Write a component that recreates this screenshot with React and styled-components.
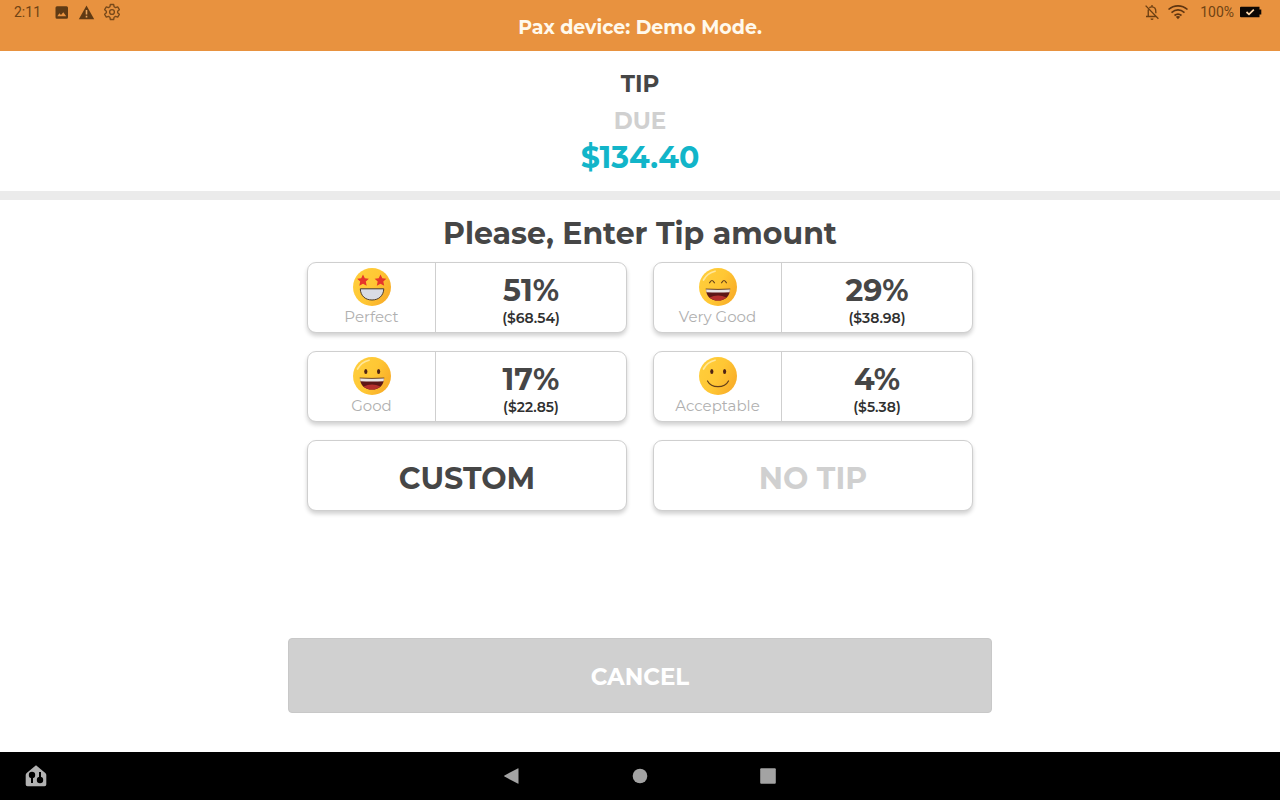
import React from "react";
import styled, { createGlobalStyle } from "styled-components";

const GlobalStyle = createGlobalStyle`
  * { box-sizing: border-box; }
  body {
    margin: 0;
    background: #fff;
    font-family: Montserrat, Inter, "Open Sans", sans-serif;
    color: #464646;
  }
  h1, h2, p { margin: 0; }
  button { font: inherit; color: inherit; cursor: pointer; }
  svg { display: block; flex: none; }
`;

const Page = styled.div`
  min-height: 100vh;
  display: flex;
  flex-direction: column;
`;

const Header = styled.header`
  display: grid;
  grid-template-columns: 1fr auto 1fr;
  height: 51px;
  background: #e8923f;
`;

const StatusGroup = styled.div`
  display: flex;
  align-items: center;
  justify-content: ${(p) => (p.$end ? "flex-end" : "flex-start")};
  gap: ${(p) => (p.$end ? "6px" : "8px")};
  height: 24px;
  padding: 0 18px 0 14px;
  font-family: Roboto, sans-serif;
  font-size: 14px;
  line-height: 24px;
  color: #6f4314;
`;

const Clock = styled.time`
  margin-right: 4px;
`;

const Battery = styled.span`
  margin-left: 5px;
`;

const DeviceNotice = styled.p`
  align-self: center;
  padding-top: 4px;
  font-size: 19px;
  line-height: 24px;
  font-weight: 700;
  color: #fff9ec;
`;

const Summary = styled.section`
  display: flex;
  flex-direction: column;
  align-items: center;
  height: 149px;
  padding-top: 15px;
  border-bottom: 9px solid #ebebeb;
  text-align: center;
`;

const SummaryLine = styled.p`
  font-size: 23px;
  line-height: 37px;
  font-weight: 700;
  color: ${(p) => (p.$muted ? "#d0d0d0" : "#464646")};
`;

const Total = styled.p`
  font-size: 30px;
  line-height: 36px;
  font-weight: 700;
  color: #12b5c9;
`;

const Main = styled.main`
  flex: 1;
  display: flex;
  flex-direction: column;
  align-items: center;
  padding: 14px 24px 39px;
`;

const Prompt = styled.h2`
  font-size: 30px;
  line-height: 40px;
  font-weight: 700;
`;

const Choices = styled.div`
  display: grid;
  grid-template-columns: 1fr 1fr;
  grid-auto-rows: 71px;
  gap: 18px 26px;
  width: 100%;
  max-width: 666px;
  margin-top: 8px;
`;

const Card = styled.button`
  display: flex;
  align-items: stretch;
  justify-content: center;
  padding: 0;
  border: 1px solid #cfcfcf;
  border-radius: 9px;
  background: #fff;
  box-shadow: 0 3px 4px rgba(0, 0, 0, 0.18);
`;

const WideCard = styled(Card)`
  align-items: center;
  padding-top: 6px;
  font-size: 30px;
  line-height: 40px;
  font-weight: 700;
  color: ${(p) => (p.$muted ? "#d0d0d0" : "#464646")};
`;

const Rating = styled.span`
  display: flex;
  flex-direction: column;
  align-items: center;
  width: 128px;
  padding-top: 4px;
  border-right: 1px solid #cfcfcf;
  font-size: 15px;
  line-height: 20px;
  font-weight: 400;
  color: #b0b0b0;
`;

const Amounts = styled.span`
  flex: 1;
  display: flex;
  flex-direction: column;
  align-items: center;
  padding-top: 10px;
`;

const Percent = styled.span`
  font-size: 30px;
  line-height: 35px;
  font-weight: 700;
`;

const Money = styled.span`
  font-size: 14px;
  line-height: 20px;
  font-weight: 600;
  color: #303030;
`;

const Cancel = styled.button`
  width: 100%;
  max-width: 704px;
  height: 75px;
  margin-top: auto;
  padding: 2px 0 0;
  border: 1px solid #c8c8c8;
  border-radius: 4px;
  background: #d0d0d0;
  font-size: 23px;
  line-height: 30px;
  font-weight: 700;
  color: #fff;
`;

const NavBar = styled.nav`
  display: grid;
  grid-template-columns: 1fr auto 1fr;
  align-items: center;
  height: 48px;
  padding: 0 24px;
  background: #000;
`;

const NavKeys = styled.div`
  display: flex;
  gap: 104px;
`;

const NavButton = styled.button`
  display: flex;
  width: 24px;
  height: 24px;
  padding: 0;
  border: 0;
  background: none;
`;

const STAR = "M0 -6 L1.8 -2.2 L5.9 -1.8 L2.8 1.1 L3.7 5.2 L0 3.2 L-3.7 5.2 L-2.8 1.1 L-5.9 -1.8 L-1.8 -2.2Z";

function Face({ mood }) {
  const id = `skin-${mood}`;
  return (
    <svg width="40" height="40" viewBox="0 0 40 40" aria-hidden="true">
      <defs>
        <linearGradient id={id} x1="0" y1="0" x2="1" y2="0.5">
          <stop offset="0" stopColor="#ffcf3d" />
          <stop offset="0.6" stopColor="#ffc734" />
          <stop offset="1" stopColor="#f9b02a" />
        </linearGradient>
      </defs>
      <circle cx="20" cy="20" r="19" fill={`url(#${id})`} />
      {mood !== "perfect" && (
        <path d="M5.5 13 Q9 6.2 17 4.2" fill="none" stroke="#ffe79a" strokeWidth="1.7" strokeLinecap="round" />
      )}
      {mood === "perfect" && (
        <>
          <path d={STAR} transform="translate(11 13.5)" fill="#e5362b" />
          <path d={STAR} transform="translate(28.5 13.5)" fill="#e5362b" />
          <path d="M8.3 21.8 H31.8 C31.5 28.5 27 33 20 33 S8.5 28.5 8.3 21.8Z" fill="#d9dce4" stroke="#4b3b2c" strokeWidth="1" />
        </>
      )}
      {mood === "verygood" && (
        <path d="M11.600 15.800 Q14 11.200 16.400 15.800 M23.600 15.800 Q26 11.200 28.400 15.800" fill="none" stroke="#65401a" strokeWidth="1.200" strokeLinecap="round" />
      )}
      {(mood === "good" || mood === "acceptable") && (
        <>
          <ellipse cx="13.8" cy="15.6" rx="1.6" ry="2.5" fill="#4f2415" />
          <ellipse cx="26.6" cy="15.6" rx="1.6" ry="2.5" fill="#4f2415" />
        </>
      )}
      {(mood === "good" || mood === "verygood") && (
        <>
          <path d="M8 22 Q20 22.800 32 22 C32 29 27.500 33.600 20 33.600 S8 29 8 22Z" fill="#5e1716" />
          <path d="M8 22 Q20 22.800 32 22 L31.600 25.200 Q20 26 8.400 25.200Z" fill="#e9e5e3" />
          <path d="M11.500 30.500 Q20 26.500 28.500 30.500 Q25 33.600 20 33.600 T11.500 30.500Z" fill="#b5302c" />
          <path d="M7.700 22 Q20 22.800 32.300 22" fill="none" stroke="#5b3516" strokeWidth="0.8" />
        </>
      )}
      {mood === "acceptable" && (
        <path d="M9.5 25 C13.5 32.6 26.5 32.6 30.5 25" fill="none" stroke="#65401a" strokeWidth="1.2" strokeLinecap="round" />
      )}
    </svg>
  );
}

const TIPS = [
  { mood: "perfect", label: "Perfect", percent: "51%", money: "($68.54)" },
  { mood: "verygood", label: "Very Good", percent: "29%", money: "($38.98)" },
  { mood: "good", label: "Good", percent: "17%", money: "($22.85)" },
  { mood: "acceptable", label: "Acceptable", percent: "4%", money: "($5.38)" },
];

function TipCard({ tip }) {
  return (
    <Card type="button">
      <Rating>
        <Face mood={tip.mood} />
        {tip.label}
      </Rating>
      <Amounts>
        <Percent>{tip.percent}</Percent>
        <Money>{tip.money}</Money>
      </Amounts>
    </Card>
  );
}

const ImageIcon = () => (
  <svg width="17" height="17" viewBox="0 0 17 17" aria-hidden="true">
    <path fillRule="evenodd" d="M4 2.3h9.5a1.5 1.5 0 0 1 1.5 1.5v9.4a1.5 1.5 0 0 1-1.5 1.5H4a1.5 1.5 0 0 1-1.5-1.5V3.8A1.5 1.5 0 0 1 4 2.3Z M4.3 12.2H13.2L10.3 8.2 8 11 6.4 9.2Z" fill="#5f3a14" />
  </svg>
);

const WarningIcon = () => (
  <svg width="17" height="17" viewBox="0 0 17 17" aria-hidden="true">
    <path d="M8.5 1.5 16.2 15.2H.8Z" fill="#5f3a14" />
    <path d="M8.5 6v4.6M8.5 11.7v1.7" stroke="#e8a45c" strokeWidth="1.6" />
  </svg>
);

const GearIcon = () => (
  <svg width="18" height="18" viewBox="0 0 24 24" fill="none" stroke="#78491a" strokeWidth="1.8" strokeLinejoin="round" aria-hidden="true">
    <path d="M9.8 2h4.4l.6 3 1.9 1.1 2.9-1 2.2 3.8L19.5 11v2l2.3 2.1-2.2 3.8-2.9-1-1.9 1.1-.6 3H9.8l-.6-3-1.9-1.1-2.9 1-2.2-3.8L4.5 13v-2L2.2 8.9l2.2-3.8 2.9 1L9.2 5Z" />
    <circle cx="12" cy="12" r="3.2" />
  </svg>
);

const BellOffIcon = () => (
  <svg width="18" height="18" viewBox="0 0 24 24" fill="none" stroke="#6b3f12" strokeWidth="1.8" aria-hidden="true">
    <path d="M7 8.5V17.5M4 18H18M8.5 6.3C10 4.8 14 4.8 15.8 6.8 17 8 17.2 10 17.2 13.5M12 2.5V5M3.5 3.5 20.5 21" />
    <path d="M10 20.5h4a2 2 0 0 1-4 0Z" fill="#6b3f12" stroke="none" />
  </svg>
);

const WifiIcon = () => (
  <svg width="22" height="18" viewBox="0 0 22 18" fill="none" stroke="#5f3510" strokeWidth="1.6" aria-hidden="true">
    <path d="M1.5 6.5C7 1.7 15 1.7 20.5 6.5M4.5 9.6C8.5 6.3 13.5 6.3 17.5 9.6M7.5 12.5C9.7 10.8 12.3 10.8 14.5 12.5" />
    <path d="M8.8 13.8Q11 12.2 13.2 13.8L11 16.3Z" fill="#5f3510" stroke="none" />
  </svg>
);

const BatteryIcon = () => (
  <svg width="22" height="12" viewBox="0 0 22 12" aria-hidden="true">
    <path d="M1 .8H19.5V3.5H21.3V8.5H19.5V11.2H1Q0 11.2 0 10.2V1.8Q0 .8 1 .8Z" fill="#0b0704" />
    <path d="M6.5 6 9 8.3 13.8 3.6" fill="none" stroke="#ffd9ac" strokeWidth="1.7" />
  </svg>
);

const HomeControlsIcon = () => (
  <svg width="24" height="24" viewBox="0 0 24 24" aria-hidden="true">
    <path d="M12 1.2 21.3 9Q22.3 9.8 22.3 11V20.5Q22.3 22.3 20.5 22.3H3.5Q1.7 22.3 1.7 20.5V11Q1.7 9.8 2.7 9Z" fill="#b2b2b2" />
    <path d="M8 12V19M16 8V15" stroke="#000" strokeWidth="2" />
    <circle cx="8" cy="11" r="3.2" />
    <circle cx="16" cy="16" r="3.2" />
  </svg>
);

export default function App() {
  return (
    <>
      <GlobalStyle />
      <Page>
        <Header>
          <StatusGroup>
            <Clock>2:11</Clock>
            <ImageIcon />
            <WarningIcon />
            <GearIcon />
          </StatusGroup>
          <DeviceNotice>Pax device: Demo Mode.</DeviceNotice>
          <StatusGroup $end>
            <BellOffIcon />
            <WifiIcon />
            <Battery>100%</Battery>
            <BatteryIcon />
          </StatusGroup>
        </Header>
        <Summary>
          <SummaryLine as="h1">TIP</SummaryLine>
          <SummaryLine $muted>DUE</SummaryLine>
          <Total>$134.40</Total>
        </Summary>
        <Main>
          <Prompt>Please, Enter Tip amount</Prompt>
          <Choices>
            {TIPS.map((tip) => (
              <TipCard key={tip.mood} tip={tip} />
            ))}
            <WideCard type="button">CUSTOM</WideCard>
            <WideCard type="button" $muted>NO TIP</WideCard>
          </Choices>
          <Cancel type="button">CANCEL</Cancel>
        </Main>
        <NavBar aria-label="System">
          <NavButton type="button" aria-label="Device controls">
            <HomeControlsIcon />
          </NavButton>
          <NavKeys>
            <NavButton type="button" aria-label="Back">
              <svg width="24" height="24" viewBox="0 0 24 24" aria-hidden="true">
                <path d="M18.5 4.8V19.2Q18.5 20 17.7 19.6L4.5 12.6Q3.6 12 4.5 11.4L17.7 4.4Q18.5 4 18.5 4.8Z" fill="#a3a3a3" />
              </svg>
            </NavButton>
            <NavButton type="button" aria-label="Home">
              <svg width="24" height="24" viewBox="0 0 24 24" aria-hidden="true">
                <circle cx="12" cy="12" r="7.3" fill="#a3a3a3" />
              </svg>
            </NavButton>
            <NavButton type="button" aria-label="Recent apps">
              <svg width="24" height="24" viewBox="0 0 24 24" aria-hidden="true">
                <rect x="4.2" y="4.2" width="15.6" height="15.6" rx="1" fill="#a3a3a3" />
              </svg>
            </NavButton>
          </NavKeys>
        </NavBar>
      </Page>
    </>
  );
}
